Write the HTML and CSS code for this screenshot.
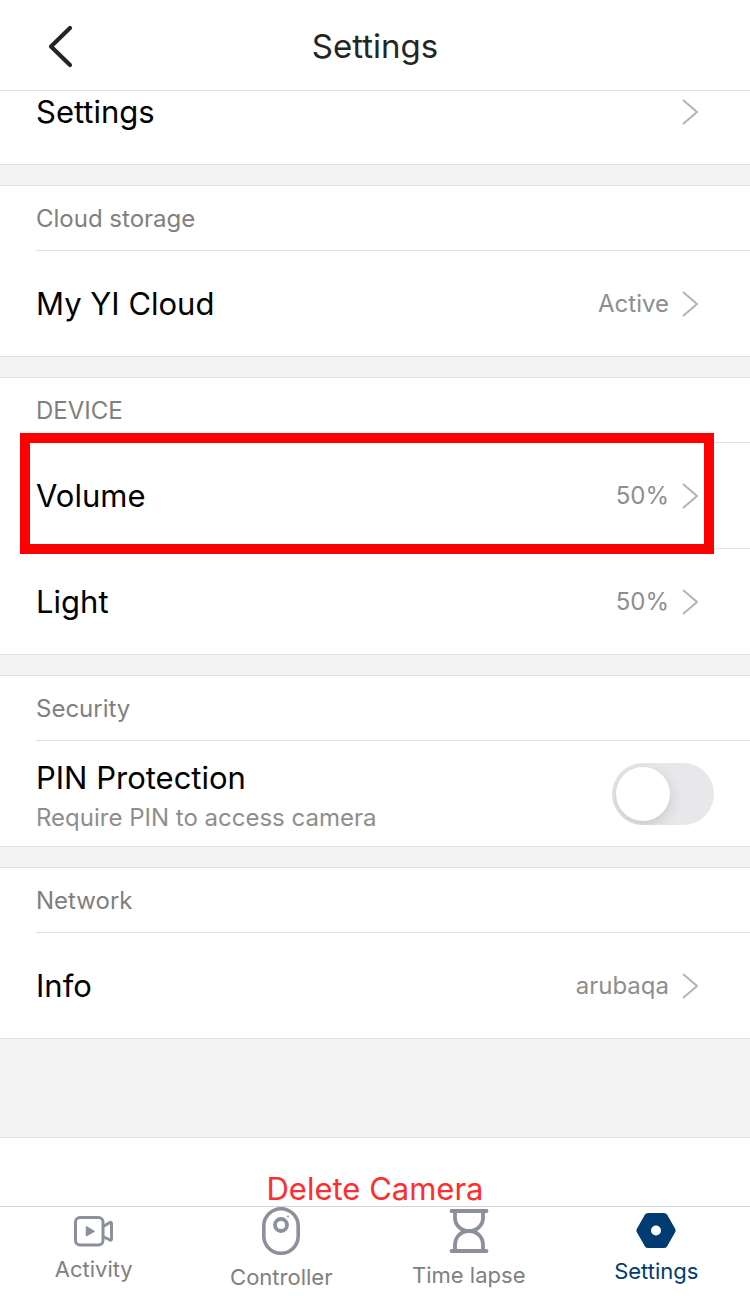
FILE: index.html
```
<!DOCTYPE html>
<html lang="en">

<head>
    <meta charset="UTF-8">
    <meta name="viewport" content="width=device-width, initial-scale=1.0">
    <title>Settings</title>
    <link rel="stylesheet" href="styles.css">
</head>

<body>
    <header class="topbar">
        <button class="back" aria-label="Back">
            <svg width="28" height="44" viewBox="0 0 28 44"><path d="M24 4L5 22.500L24 41" fill="none" stroke="#252525" stroke-width="4.200" stroke-linecap="round" stroke-linejoin="round"/></svg>
        </button>
        <h1>Settings</h1>
    </header>

    <main>
        <section class="group group-first">
            <button class="row row-cut">
                <span class="name">Settings</span>
                <svg class="chevron" viewBox="0 0 16 26"><path d="M1 1L15 13L1 25"/></svg>
            </button>
        </section>

        <section class="group">
            <h2>Cloud storage</h2>
            <button class="row">
                <span class="name">My YI Cloud</span>
                <span class="value">Active</span>
                <svg class="chevron" viewBox="0 0 16 26"><path d="M1 1L15 13L1 25"/></svg>
            </button>
        </section>

        <section class="group">
            <h2>DEVICE</h2>
            <button class="row highlighted">
                <span class="name">Volume</span>
                <span class="value">50%</span>
                <svg class="chevron" viewBox="0 0 16 26"><path d="M1 1L15 13L1 25"/></svg>
            </button>
            <button class="row">
                <span class="name">Light</span>
                <span class="value">50%</span>
                <svg class="chevron" viewBox="0 0 16 26"><path d="M1 1L15 13L1 25"/></svg>
            </button>
        </section>

        <section class="group">
            <h2>Security</h2>
            <div class="row row-toggle">
                <label class="text" for="pin">
                    <span class="name">PIN Protection</span>
                    <span class="hint">Require PIN to access camera</span>
                </label>
                <input type="checkbox" role="switch" id="pin" class="toggle">
            </div>
        </section>

        <section class="group">
            <h2>Network</h2>
            <button class="row">
                <span class="name">Info</span>
                <span class="value">arubaqa</span>
                <svg class="chevron" viewBox="0 0 16 26"><path d="M1 1L15 13L1 25"/></svg>
            </button>
        </section>

        <section class="group group-delete">
            <button class="delete">Delete Camera</button>
        </section>
    </main>

    <nav class="tabs">
        <a href="#activity" class="tab">
            <svg width="40" height="31" viewBox="0 0 40 31" fill="none" stroke="#8b909c" stroke-width="3" stroke-linejoin="round">
                <rect x="1.500" y="1.500" width="27.500" height="27.500" rx="4.500"/>
                <path d="M29 10.500L36 6.500Q37.500 6 37.500 7.500V23Q37.500 24.500 36 24L29 20.500"/>
                <path d="M12.500 11L20 15.300L12.500 19.600Z" fill="#8b909c" stroke-width="1.500"/>
            </svg>
            <span>Activity</span>
        </a>
        <a href="#controller" class="tab">
            <svg width="38" height="48" viewBox="0 0 38 48" fill="none" stroke="#8b909c">
                <rect x="1.800" y="1.800" width="34.400" height="44.400" rx="17.200" stroke-width="3.600"/>
                <circle cx="19" cy="18" r="6" stroke-width="3.800"/>
                <circle cx="26" cy="9.500" r="1" fill="#8b909c" stroke="none"/>
            </svg>
            <span>Controller</span>
        </a>
        <a href="#timelapse" class="tab">
            <svg width="40" height="44" viewBox="0 0 40 44" fill="none" stroke="#8b909c" stroke-width="3.800" stroke-linecap="round">
                <path d="M2.500 2H37.500M2.500 42H37.500"/>
                <path d="M6 3V9C6 16 12 22 20 22S34 16 34 9V3M6 41V36C6 28 12 22 20 22S34 28 34 36V41"/>
            </svg>
            <span>Time lapse</span>
        </a>
        <a href="#settings" class="tab active">
            <svg width="40" height="36" viewBox="0 0 40 36">
                <path fill="#003b71" fill-rule="evenodd" d="M12 0H28Q30 0 31 1.600L39 15.500Q40.200 17.500 39 19.500L31 33.400Q30 35 28 35H12Q10 35 9 33.400L1 19.500Q-.2 17.500 1 15.500L9 1.600Q10 0 12 0ZM20 12.500A5 5 0 1 0 20 22.500A5 5 0 1 0 20 12.500Z"/>
            </svg>
            <span>Settings</span>
        </a>
    </nav>
</body>

</html>
```
FILE: styles.css
```
* {
    box-sizing: border-box;
}

body {
    margin: 0;
    background-color: #f4f4f4;
    font-family: Inter, "Liberation Sans", sans-serif;
    color: #000;
}

button {
    background: none;
    border: none;
    padding: 0;
    font: inherit;
    color: inherit;
    text-align: left;
    cursor: pointer;
}

svg {
    display: block;
    flex-shrink: 0;
}

.topbar {
    display: grid;
    grid-template-columns: 1fr auto 1fr;
    align-items: center;
    height: 91px;
    padding-top: 2px;
    background-color: #fff;
    border-bottom: 1px solid #e0e0e0;
}

.back {
    justify-self: start;
    padding-left: 46px;
}

h1 {
    margin: 0;
    font-size: 33px;
    line-height: 40px;
    font-weight: 400;
    color: #252525;
}

main {
    display: flex;
    flex-direction: column;
    gap: 20px;
}

.group {
    background-color: #fff;
    border-top: 1px solid #e0e0e0;
    border-bottom: 1px solid #e0e0e0;
    padding-left: 36px;
}

.group-first {
    border-top: none;
}

h2 {
    margin: 0;
    padding-top: 2px;
    font-size: 24px;
    line-height: 62px;
    font-weight: 400;
    color: #808080;
}

.row {
    display: flex;
    align-items: center;
    gap: 13px;
    width: 100%;
    height: 106px;
    padding-right: 52px;
    border-top: 1px solid #e0e0e0;
}

/* first row is scrolled half under the top bar */
.row-cut {
    height: 73px;
    padding-bottom: 31px;
    border-top: none;
}

.row-toggle {
    padding-right: 36px;
}

.name {
    flex: 1;
    font-size: 31px;
    line-height: 40px;
}

.value,
.hint {
    font-size: 24px;
    line-height: 40px;
    color: #8e8e8e;
}

.text {
    flex: 1;
    display: flex;
    flex-direction: column;
    padding-top: 8px;
}

.chevron {
    width: 16px;
    height: 26px;
    fill: none;
    stroke: #b4b4b4;
    stroke-width: 2;
}

.highlighted {
    position: relative;
}

.highlighted::after {
    content: "";
    position: absolute;
    top: -10px;
    bottom: -6px;
    left: -16px;
    right: 36px;
    border: 10px solid #f00;
}

.toggle {
    appearance: none;
    width: 102px;
    height: 62px;
    margin: 0;
    padding: 4px;
    border-radius: 31px;
    background-color: #e8e8ea;
    overflow: hidden;
    cursor: pointer;
}

.toggle::before {
    content: "";
    display: block;
    width: 54px;
    height: 54px;
    border-radius: 50%;
    background-color: #fff;
    box-shadow: 0 4px 14px rgba(0, 0, 0, 0.15);
}

.toggle:checked {
    background-color: #003b71;
}

.toggle:checked::before {
    margin-left: auto;
}

.group-delete {
    margin-top: 78px;
    padding-left: 0;
}

.delete {
    width: 100%;
    height: 101px;
    font-size: 31px;
    text-align: center;
    color: #ff2d2d;
}

.tabs {
    position: fixed;
    left: 0;
    right: 0;
    bottom: 0;
    display: flex;
    height: 90px;
    padding-bottom: 5px;
    background-color: #fff;
    border-top: 1px solid #d4d4d4;
}

.tab {
    flex: 1;
    display: flex;
    flex-direction: column;
    align-items: center;
    justify-content: center;
    gap: 8px;
    font-size: 22px;
    line-height: 28px;
    color: #808080;
    text-decoration: none;
}

.tab.active {
    color: #003b71;
}
```
